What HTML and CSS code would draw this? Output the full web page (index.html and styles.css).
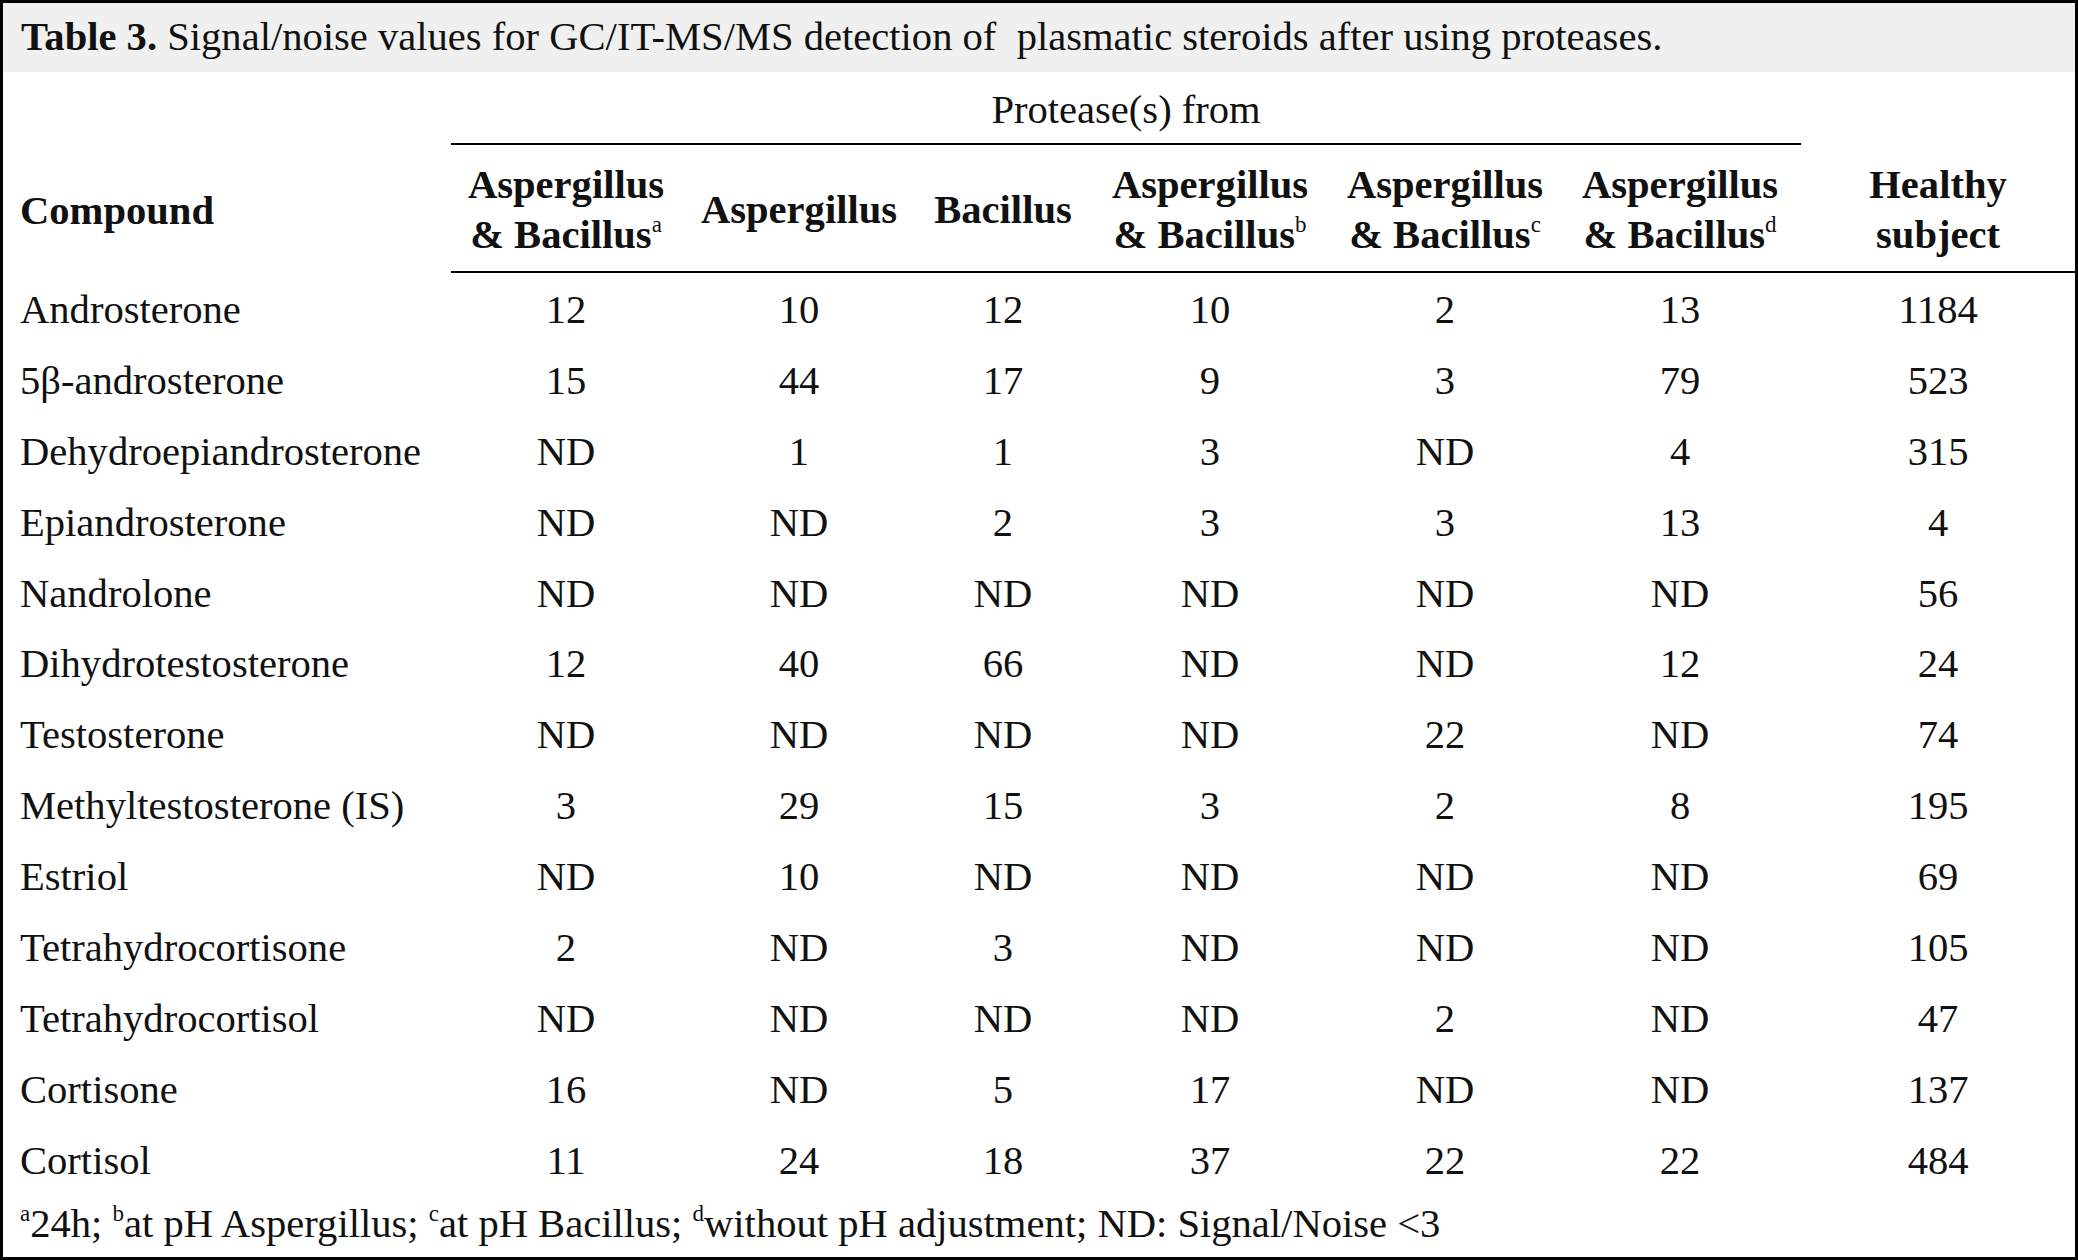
FILE: index.html
```html
<!DOCTYPE html>
<html lang="en">
<head>
<meta charset="utf-8">
<title>Table 3</title>
<link rel="stylesheet" href="styles.css">
</head>
<body>
<div class="frame">
  <div class="caption"><b>Table 3.</b> Signal/noise values for GC/IT-MS/MS detection of&nbsp; plasmatic steroids after using proteases.</div>
  <table class="data">
    <colgroup>
      <col class="c0"><col class="c1"><col class="c2"><col class="c3"><col class="c4"><col class="c5"><col class="c6"><col class="c7">
    </colgroup>
    <thead>
      <tr class="h1">
        <th></th>
        <th colspan="6" class="group">Protease(s) from</th>
        <th></th>
      </tr>
      <tr class="h2">
        <th class="name">Compound</th>
        <th class="ruled">Aspergillus<br>&amp; Bacillus<span class="sup">a</span></th>
        <th class="ruled">Aspergillus</th>
        <th class="ruled">Bacillus</th>
        <th class="ruled">Aspergillus<br>&amp; Bacillus<span class="sup">b</span></th>
        <th class="ruled">Aspergillus<br>&amp; Bacillus<span class="sup">c</span></th>
        <th class="ruled">Aspergillus<br>&amp; Bacillus<span class="sup">d</span></th>
        <th class="ruled">Healthy<br>subject</th>
      </tr>
    </thead>
    <tbody>
      <tr><td class="name">Androsterone</td><td>12</td><td>10</td><td>12</td><td>10</td><td>2</td><td>13</td><td>1184</td></tr>
      <tr><td class="name">5β-androsterone</td><td>15</td><td>44</td><td>17</td><td>9</td><td>3</td><td>79</td><td>523</td></tr>
      <tr><td class="name">Dehydroepiandrosterone</td><td>ND</td><td>1</td><td>1</td><td>3</td><td>ND</td><td>4</td><td>315</td></tr>
      <tr><td class="name">Epiandrosterone</td><td>ND</td><td>ND</td><td>2</td><td>3</td><td>3</td><td>13</td><td>4</td></tr>
      <tr><td class="name">Nandrolone</td><td>ND</td><td>ND</td><td>ND</td><td>ND</td><td>ND</td><td>ND</td><td>56</td></tr>
      <tr><td class="name">Dihydrotestosterone</td><td>12</td><td>40</td><td>66</td><td>ND</td><td>ND</td><td>12</td><td>24</td></tr>
      <tr><td class="name">Testosterone</td><td>ND</td><td>ND</td><td>ND</td><td>ND</td><td>22</td><td>ND</td><td>74</td></tr>
      <tr><td class="name">Methyltestosterone (IS)</td><td>3</td><td>29</td><td>15</td><td>3</td><td>2</td><td>8</td><td>195</td></tr>
      <tr><td class="name">Estriol</td><td>ND</td><td>10</td><td>ND</td><td>ND</td><td>ND</td><td>ND</td><td>69</td></tr>
      <tr><td class="name">Tetrahydrocortisone</td><td>2</td><td>ND</td><td>3</td><td>ND</td><td>ND</td><td>ND</td><td>105</td></tr>
      <tr><td class="name">Tetrahydrocortisol</td><td>ND</td><td>ND</td><td>ND</td><td>ND</td><td>2</td><td>ND</td><td>47</td></tr>
      <tr><td class="name">Cortisone</td><td>16</td><td>ND</td><td>5</td><td>17</td><td>ND</td><td>ND</td><td>137</td></tr>
      <tr><td class="name">Cortisol</td><td>11</td><td>24</td><td>18</td><td>37</td><td>22</td><td>22</td><td>484</td></tr>
    </tbody>
  </table>
  <div class="foot"><span class="fsup">a</span>24h; <span class="fsup">b</span>at pH Aspergillus; <span class="fsup">c</span>at pH Bacillus; <span class="fsup">d</span>without pH adjustment; ND: Signal/Noise &lt;3</div>
</div>
</body>
</html>
```
FILE: styles.css
```css
html, body {
  margin: 0;
  padding: 0;
  background: #ffffff;
}

.frame {
  box-sizing: border-box;
  width: 2078px;
  height: 1260px;
  border: 3px solid #000;
  font-family: "Liberation Serif", "Times New Roman", serif;
  font-size: 40.6px;
  color: #111;
  overflow: hidden;
}

.caption {
  background: #f0f0f0;
  height: 69px;
  box-sizing: border-box;
  padding: 11px 0 0 18px;
  line-height: 46px;
  white-space: nowrap;
}

.caption b {
  font-weight: bold;
}

.data {
  border-collapse: separate;
  border-spacing: 0;
  table-layout: fixed;
  width: 2072px;
}

.c0 { width: 448px; }
.c1 { width: 230px; }
.c2 { width: 236px; }
.c3 { width: 172px; }
.c4 { width: 242px; }
.c5 { width: 228px; }
.c6 { width: 242px; }
.c7 { width: 274px; }

.data th,
.data td {
  padding: 0;
  text-align: center;
  vertical-align: middle;
  white-space: nowrap;
}

.h1 th {
  height: 73px;
  font-weight: normal;
  line-height: 46px;
  padding-top: 4px;
  box-sizing: border-box;
}

.h1 th.group {
  border-bottom: 2px solid #000;
}

.h2 th {
  height: 122px;
  padding-top: 4px;
  font-weight: bold;
  line-height: 50px;
  box-sizing: content-box;
}

.h2 th.ruled {
  border-bottom: 2px solid #000;
}

.data .name {
  text-align: left;
  padding-left: 17px;
}

.data td {
  height: 67.9px;
  padding-top: 3px;
  line-height: 46px;
}

.sup {
  font-size: 23px;
  font-weight: normal;
  vertical-align: 16px;
  line-height: 0;
}

.foot {
  padding: 6px 0 0 17px;
  line-height: 46px;
  white-space: nowrap;
}

.fsup {
  font-size: 23px;
  vertical-align: 16px;
  line-height: 0;
}
```
